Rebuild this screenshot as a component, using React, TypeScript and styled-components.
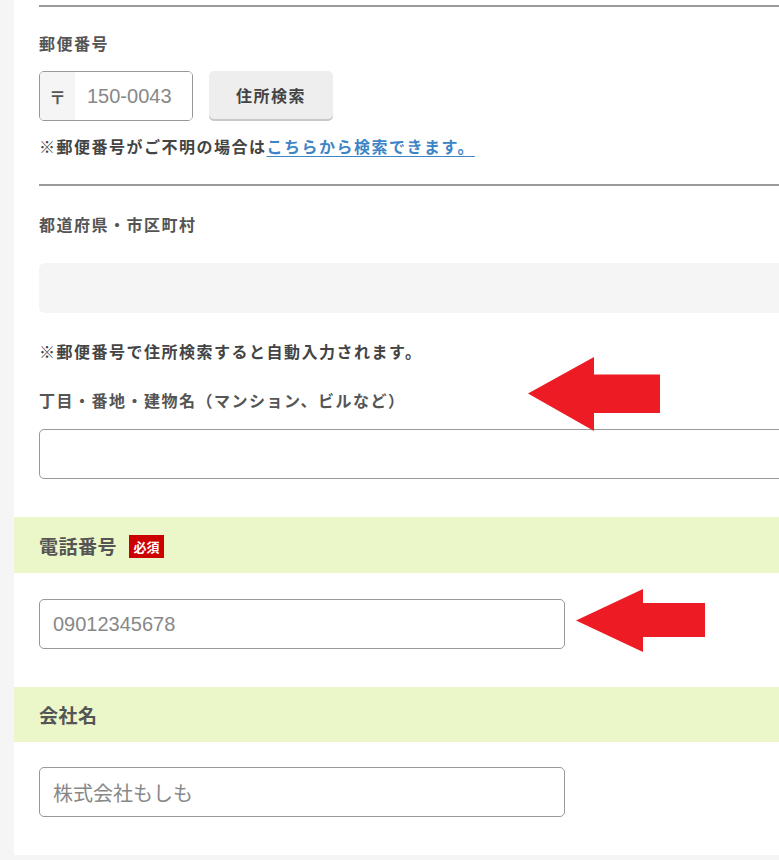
import styled, { createGlobalStyle } from "styled-components";

const GlobalStyle = createGlobalStyle`
  html, body {
    margin: 0;
    padding: 0;
    background: #f5f5f5;
    overflow: hidden;
  }
  body {
    font-family: "Noto Sans CJK JP", "Noto Sans", sans-serif;
    color: #555;
  }
`;

const Panel = styled.div`
  position: relative;
  margin-left: 14px;
  width: 820px;
  background: #fff;
  padding-bottom: 38px;
`;

const Block = styled.div`
  padding: 5px 0 0 25px;
`;

const Divider = styled.div<{ $top?: number }>`
  height: 2px;
  background: #9a9a9a;
  margin-top: ${(p) => p.$top ?? 0}px;
`;

const Label = styled.div<{ $top: number }>`
  margin-top: ${(p) => p.$top}px;
  font-size: 16px;
  letter-spacing: 1.5px;
  line-height: 24px;
  font-weight: bold;
  color: #555;
`;

const Note = styled(Label)`
  color: #444;
`;

const Link = styled.a`
  color: #3d85c6;
  text-decoration: underline;
  text-underline-offset: 3px;
  cursor: pointer;
`;

const ZipRow = styled.div`
  display: flex;
  gap: 16px;
  margin-top: 16px;
`;

const ZipField = styled.div`
  display: flex;
  width: 154px;
  height: 50px;
  box-sizing: border-box;
  border: 1px solid #999;
  border-radius: 5px;
  overflow: hidden;
`;

const ZipMark = styled.span`
  display: flex;
  align-items: center;
  justify-content: center;
  width: 35px;
  background: #f5f5f5;
  font-size: 17px;
  font-weight: bold;
  color: #555;
`;

const ZipInput = styled.input`
  flex: 1;
  min-width: 0;
  border: none;
  outline: none;
  padding: 0 0 0 12px;
  font-family: "Liberation Sans", Arial, sans-serif;
  font-size: 20px;
  color: #333;
  &::placeholder {
    color: #888;
  }
`;

const SearchButton = styled.button`
  width: 124px;
  height: 48px;
  border: none;
  border-radius: 5px;
  background: #eee;
  box-shadow: 0 2px 0 #c8c8c8;
  font-family: "Noto Sans CJK JP", sans-serif;
  font-size: 16px;
  letter-spacing: 1.5px;
  font-weight: bold;
  color: #444;
  cursor: pointer;
`;

const ReadOnlyBox = styled.div`
  margin-top: 27px;
  height: 50px;
  background: #f5f5f5;
  border-radius: 6px;
`;

const TextInput = styled.input<{ $top?: number; $width?: number; $cjk?: boolean }>`
  display: block;
  margin-top: ${(p) => p.$top ?? 0}px;
  width: ${(p) => (p.$width ? `${p.$width}px` : "100%")};
  height: 50px;
  box-sizing: border-box;
  border: 1px solid #999;
  border-radius: 5px;
  padding: 0 13px;
  outline: none;
  font-family: ${(p) =>
    p.$cjk ? `"Noto Sans CJK JP", sans-serif` : `"Liberation Sans", Arial, sans-serif`};
  font-size: 20px;
  color: #333;
  background: #fff;
  &::placeholder {
    color: #888;
  }
`;

const SectionHead = styled.div<{ $top: number; $height: number }>`
  display: flex;
  align-items: center;
  gap: 12px;
  margin-top: ${(p) => p.$top}px;
  height: ${(p) => p.$height}px;
  padding-left: 25px;
  background: #ebf7c9;
  font-size: 19px;
  letter-spacing: 0.5px;
  font-weight: bold;
  color: #555;
`;

const Required = styled.span`
  display: inline-flex;
  align-items: center;
  justify-content: center;
  width: 35px;
  height: 23px;
  background: #cc0000;
  color: #fff;
  font-size: 13px;
  letter-spacing: 0;
  font-weight: bold;
  margin-top: 2px;
`;

const FieldRow = styled.div<{ $top: number }>`
  display: flex;
  align-items: flex-start;
  gap: 11px;
  margin-top: ${(p) => p.$top}px;
  padding-left: 25px;
`;

const FloatingArrow = styled.svg`
  position: absolute;
  left: 514px;
  top: 357px;
`;

const RedArrow = ({ w, h, base, s1, s2 }: { w: number; h: number; base: number; s1: number; s2: number }) => (
  <svg width={w} height={h} viewBox={`0 0 ${w} ${h}`}>
    <path d={`M0 ${h / 2} L${base} 0 L${base} ${s1} L${w} ${s1} L${w} ${s2} L${base} ${s2} L${base} ${h} Z`} fill="#ed1c24" />
  </svg>
);

export default function App() {
  return (
    <>
      <GlobalStyle />
      <Panel>
        <Block>
          <Divider />
          <Label $top={24}>郵便番号</Label>
          <ZipRow>
            <ZipField>
              <ZipMark>〒</ZipMark>
              <ZipInput placeholder="150-0043" />
            </ZipField>
            <SearchButton>住所検索</SearchButton>
          </ZipRow>
          <Note $top={13}>
            ※郵便番号がご不明の場合は<Link>こちらから検索できます。 </Link>
          </Note>
          <Divider $top={26} />
          <Label $top={26}>都道府県・市区町村</Label>
          <ReadOnlyBox />
          <Note $top={26}>※郵便番号で住所検索すると自動入力されます。</Note>
          <Label $top={25}>丁目・番地・建物名（マンション、ビルなど）</Label>
          <TextInput $top={17} />
        </Block>

        <FloatingArrow width={132} height={74} viewBox="0 0 132 74">
          <path d="M0 36.5 L66 0 L66 17.5 L132 17.5 L132 56 L66 56 L66 74 Z" fill="#ed1c24" />
        </FloatingArrow>

        <SectionHead $top={38} $height={56}>
          電話番号<Required>必須</Required>
        </SectionHead>
        <FieldRow $top={16}>
          <TextInput $top={10} $width={526} placeholder="09012345678" />
          <RedArrow w={129} h={63} base={67} s1={14} s2={48} />
        </FieldRow>

        <SectionHead $top={35} $height={55}>
          会社名
        </SectionHead>
        <FieldRow $top={25}>
          <TextInput $width={526} $cjk placeholder="株式会社もしも" />
        </FieldRow>
      </Panel>
    </>
  );
}
